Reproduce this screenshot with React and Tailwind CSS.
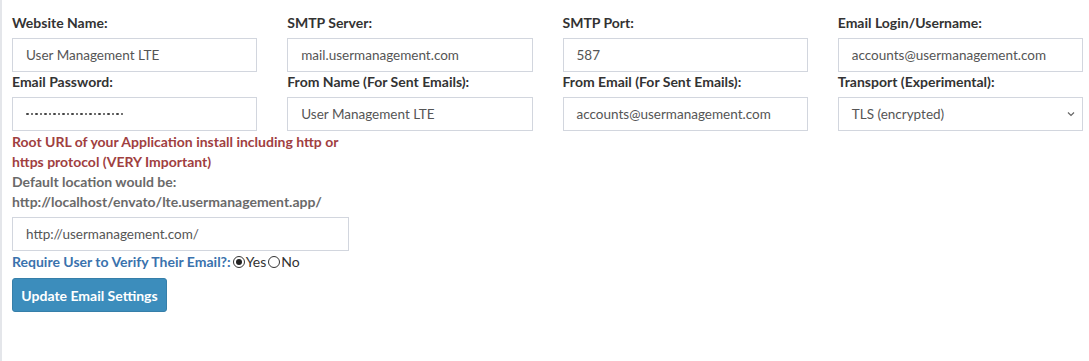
import React from "react";

const inputCls =
  "block w-full h-[34px] border border-[#d2d6de] bg-white px-[13px] text-[13.5px] text-[#555] leading-[32px] truncate";

function Field({ label, value, select, password }) {
  return (
    <div>
      <div className="h-[20px] leading-[20px] mb-[5px] text-[14px] font-bold text-[#333]">{label}</div>
      {select ? (
        <div className={inputCls + " flex items-center justify-between pr-[6px]"}>
          <span>{value}</span>
          <svg width="10" height="10" viewBox="0 0 10 10" className="text-[#666]">
            <path d="M2 3.5 L5 6.5 L8 3.5" fill="none" stroke="currentColor" strokeWidth="1.2" />
          </svg>
        </div>
      ) : password ? (
        <div className={inputCls + " flex items-center gap-[2px]"}>
          {Array.from({ length: 22 }).map((_, i) => (
            <span key={i} className="h-[2.5px] w-[2.5px] rounded-full bg-[#444]" />
          ))}
        </div>
      ) : (
        <div className={inputCls}>{value}</div>
      )}
    </div>
  );
}

function Radio({ checked }) {
  return (
    <span className="inline-flex h-[12px] w-[12px] items-center justify-center rounded-full border border-[#333] bg-white">
      {checked && <span className="h-[6px] w-[6px] rounded-full bg-[#222]" />}
    </span>
  );
}

export default function App() {
  return (
    <div
      className="w-[1089px] h-[361px] bg-white border-l-2 border-[#e4e6ea] pl-[10px] pr-[6px] pt-[13px]"
      style={{ fontFamily: "Lato, 'Liberation Sans', sans-serif" }}
    >
      <div className="grid grid-cols-4 gap-x-[30px]">
        <Field label="Website Name:" value="User Management LTE" />
        <Field label="SMTP Server:" value="mail.usermanagement.com" />
        <Field label="SMTP Port:" value="587" />
        <Field label="Email Login/Username:" value="accounts@usermanagement.com" />
        <Field label="Email Password:" password />
        <Field label="From Name (For Sent Emails):" value="User Management LTE" />
        <Field label="From Email (For Sent Emails):" value="accounts@usermanagement.com" />
        <Field label="Transport (Experimental):" value="TLS (encrypted)" select />
      </div>
      <div className="mt-[1px] text-[14px] font-bold leading-[20px]">
        <div className="text-[#a0403f] w-[340px]">
          Root URL of your Application install including http or https protocol (VERY Important)
        </div>
        <div className="text-[#6a6a6a]">Default location would be:</div>
        <div className="text-[#6a6a6a]">http://localhost/envato/lte.usermanagement.app/</div>
      </div>
      <div className="mt-[5px] w-[337px]">
        <div className={inputCls}>http://usermanagement.com/</div>
      </div>
      <div className="mt-[1px] flex items-center h-[20px] text-[14px] leading-[20px]">
        <span className="font-bold text-[#3a72ad]">Require User to Verify Their Email?:</span>
        <span className="ml-[2px] flex items-center gap-[1px] text-[#333]">
          <Radio checked />
          <span>Yes</span>
        </span>
        <span className="ml-[2px] flex items-center gap-[1px] text-[#333]">
          <Radio />
          <span>No</span>
        </span>
      </div>
      <button className="mt-[6px] h-[34px] w-[155px] rounded-[3px] border border-[#367fa9] bg-[#3c8dbc] text-[14px] font-bold text-white">
        Update Email Settings
      </button>
    </div>
  );
}
